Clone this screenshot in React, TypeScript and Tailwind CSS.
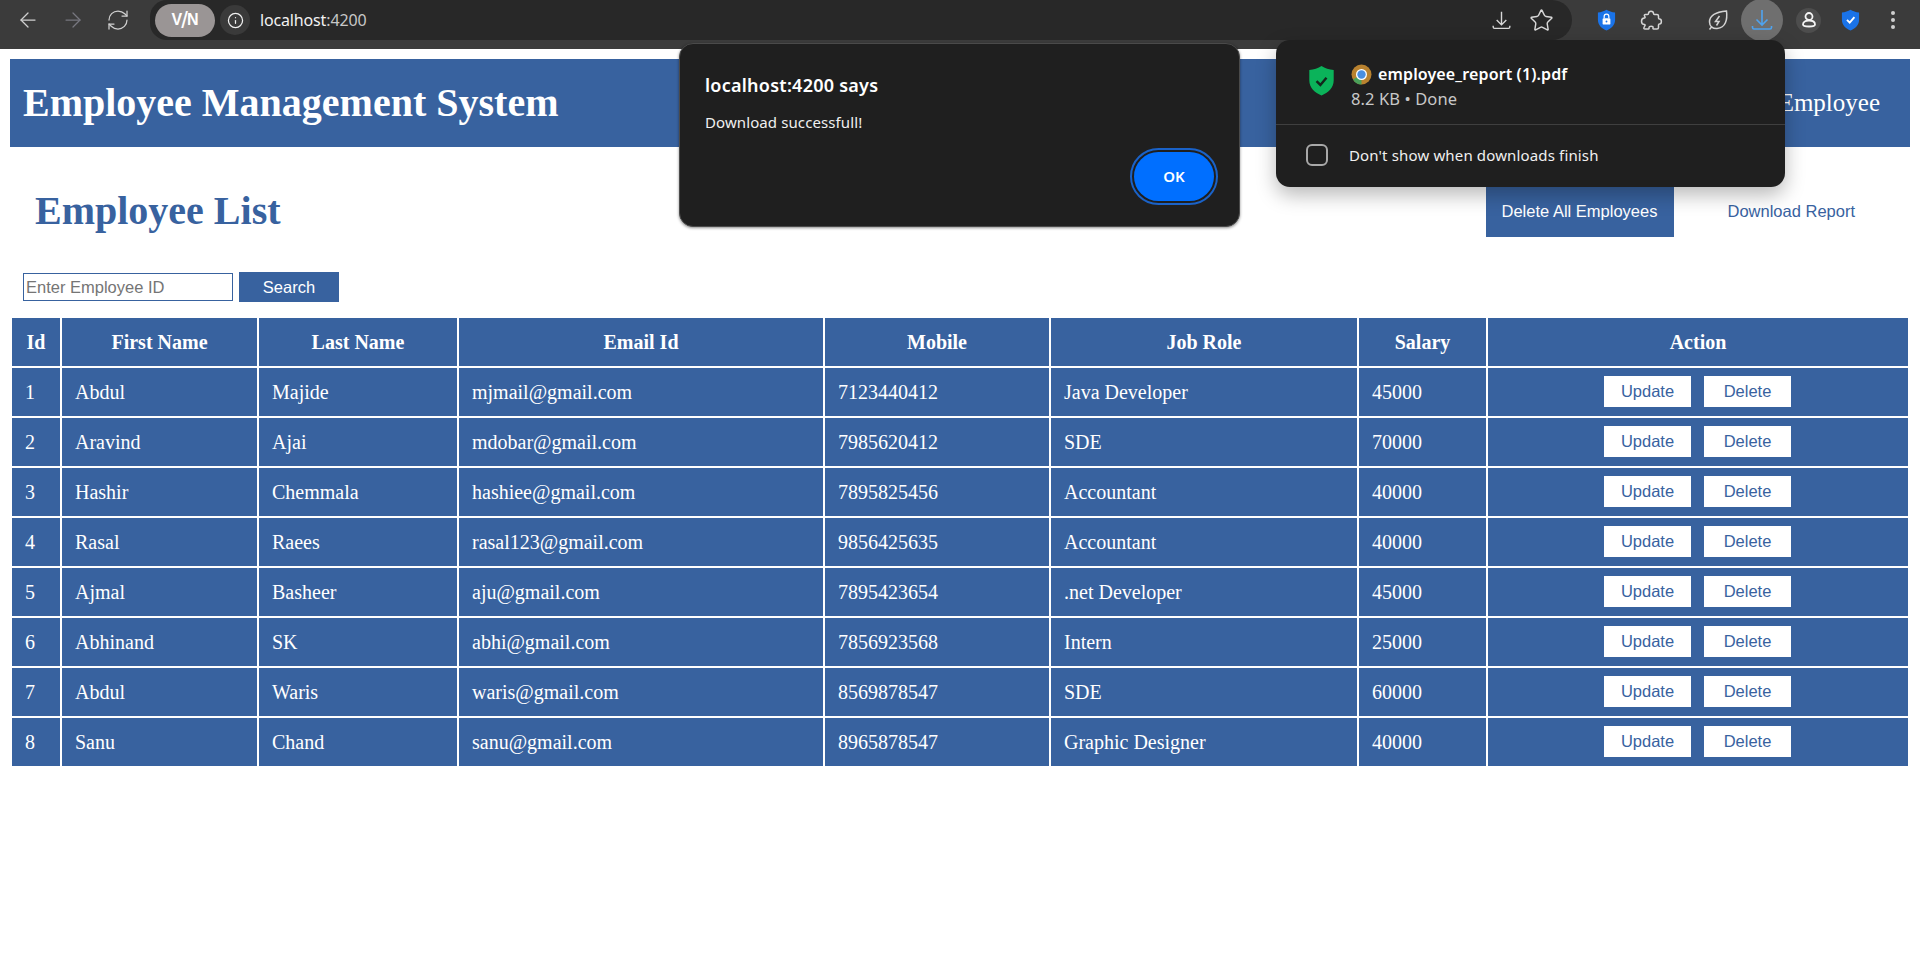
import React from "react";
import { ArrowLeft, ArrowRight, RefreshCw, Star, Info } from "lucide-react";

const rows = [
  ["1", "Abdul", "Majide", "mjmail@gmail.com", "7123440412", "Java Developer", "45000"],
  ["2", "Aravind", "Ajai", "mdobar@gmail.com", "7985620412", "SDE", "70000"],
  ["3", "Hashir", "Chemmala", "hashiee@gmail.com", "7895825456", "Accountant", "40000"],
  ["4", "Rasal", "Raees", "rasal123@gmail.com", "9856425635", "Accountant", "40000"],
  ["5", "Ajmal", "Basheer", "aju@gmail.com", "7895423654", ".net Developer", "45000"],
  ["6", "Abhinand", "SK", "abhi@gmail.com", "7856923568", "Intern", "25000"],
  ["7", "Abdul", "Waris", "waris@gmail.com", "8569878547", "SDE", "60000"],
  ["8", "Sanu", "Chand", "sanu@gmail.com", "8965878547", "Graphic Designer", "40000"],
];
const heads = ["Id", "First Name", "Last Name", "Email Id", "Mobile", "Job Role", "Salary", "Action"];
const widths = [48, 195, 198, 364, 224, 306, 127, 420];

function DownloadGlyph({ color, size = 24 }: { color: string; size?: number }) {
  return (
    <svg width={size} height={size} viewBox="0 0 24 24" fill="none" stroke={color} strokeWidth="1.600">
      <path d="M12 2v15M6.500 11.500l5.500 5.500 5.500-5.500M2.500 18v1.500a1.500 1.500 0 0 0 1.500 1.500h16a1.500 1.500 0 0 0 1.500-1.500V18" />
    </svg>
  );
}

function Shield({ fill, children, size = 19 }: { fill: string; children?: React.ReactNode; size?: number }) {
  return (
    <svg width={size} height={size * 1.15} viewBox="0 0 24 28" fill="none">
      <path d="M12 1 C15 3 19 4.200 23 4.500 V14 C23 20.500 18 25 12 27.500 C6 25 1 20.500 1 14 V4.500 C5 4.200 9 3 12 1 Z" fill={fill} />
      {children}
    </svg>
  );
}

export default function App() {
  return (
    <div className="relative min-h-[960px] w-[1920px] overflow-hidden bg-white font-['Liberation_Serif',serif]">
      {/* browser toolbar */}
      <div className="flex h-[49px] items-start bg-[#3b3b3b]">
        <div className="flex h-[40px] w-[150px] items-center pl-[5px] text-[#d0d0d0]">
          <span className="flex w-[45px] justify-center"><ArrowLeft size={24} strokeWidth={1.25} /></span>
          <span className="flex w-[45px] justify-center text-[#77777f]"><ArrowRight size={24} strokeWidth={1.25} /></span>
          <span className="flex w-[45px] justify-center"><RefreshCw size={24} strokeWidth={1.25} /></span>
        </div>
        <div className="flex h-[40px] w-[1422px] items-center rounded-r-[24px] rounded-l-[20px] bg-[#282828] pl-[5px]">
          <div className="relative flex h-[33px] w-[60px] items-center justify-center rounded-[17px] bg-[#9a9595] font-['Liberation_Sans',sans-serif] text-[16px] font-bold text-white">
            V<span className="mx-[-1px] text-[24px] font-normal leading-none">/</span>N
          </div>
          <div className="ml-[5px] flex h-[30px] w-[30px] items-center justify-center rounded-full bg-[#3a3a3a] text-[#f0f0f0]">
            <Info size={17} strokeWidth={1.75} />
          </div>
          <div className="ml-[10px] font-['Noto_Sans',sans-serif] text-[16px] tracking-[-0.15px] text-[#f2f2f2]">
            localhost<span className="text-[#c7c7c7]">:4200</span>
          </div>
          <div className="ml-auto flex items-center pr-[18px]">
            <DownloadGlyph color="#d8d8d8" size={21} />
            <Star size={25} strokeWidth={1.4} className="ml-[17px] text-[#d8d8d8]" />
          </div>
        </div>
        <div className="flex h-[40px] items-center">
          <span className="ml-[22px] flex w-[24px] justify-center">
            <Shield fill="#1a73e8">
              <rect x="7" y="12" width="10" height="8" rx="1.500" fill="#fff" />
              <path d="M9 12V9.500a3 3 0 0 1 6 0V12" stroke="#fff" strokeWidth="1.600" />
              <circle cx="12" cy="16" r="1.200" fill="#1a73e8" />
            </Shield>
          </span>
          <svg className="ml-[21px]" width="24" height="24" viewBox="0 0 24 24" fill="none" stroke="#d4d4d4" strokeWidth="1.500">
            <path d="M9.500 5.500 C9.500 2.500 14.500 2.500 14.500 5.500 C14.500 6 14.800 6.500 15.500 6.500 L18 6.500 C19 6.500 19.500 7 19.500 8 L19.500 10 C19.500 10.800 20 11 20.500 11 C23 11 23 16 20.500 16 C20 16 19.500 16.300 19.500 17 L19.500 19.500 C19.500 20.500 19 21 18 21 L14.500 21 C14 21 13.800 20.500 14 20 C15 17.500 9.500 17.500 10 20 C10.100 20.600 10 21 9.500 21 L6 21 C5 21 4.500 20.500 5 19.500 L6 17.500 C6.300 17 6 16.500 5.500 16.500 C1.500 16.500 1.500 10 5.500 10 C6 10 6.300 9.500 6 9 L5.500 8 C5 7 5.500 6.500 6.500 6.500 L8.500 6.500 C9.200 6.500 9.500 6 9.500 5.500 Z" />
          </svg>
          <svg className="ml-[43px]" width="24" height="24" viewBox="0 0 24 24" fill="none" stroke="#d4d4d4" strokeWidth="1.500">
            <path d="M20.500 3 C21.500 11 20 20 11 20.500 C7 20.800 3.500 18.500 3.500 14 C3.500 8 10 4 20.500 3 Z" />
            <path d="M13.500 8 L9.500 13.500 H13 L10.500 17.500 M3.500 21.500 L6 18.500" />
          </svg>
          <div className="ml-[11px] flex h-[42px] w-[42px] items-center justify-center rounded-full bg-[#6f6f6f]">
            <DownloadGlyph color="#4fa3ef" />
          </div>
          <div className="ml-[13px] flex h-[25px] w-[25px] items-center justify-center rounded-full bg-[#4d4d4d]">
            <svg width="18" height="18" viewBox="0 0 18 18" fill="none" stroke="#f4f4f4" strokeWidth="1.800">
              <circle cx="9" cy="5.500" r="3.500" />
              <path d="M9 9.500 C5 9.500 3 11.500 3 13.500 C3 15 4.500 15.500 9 15.500 C13.500 15.500 15 15 15 13.500 C15 11.500 13 9.500 9 9.500 Z" />
            </svg>
          </div>
          <span className="ml-[17px] flex w-[24px] justify-center">
            <Shield fill="#1a73e8">
              <path d="M7.500 14 L11 17.500 L17 10.500" stroke="#fff" strokeWidth="2.400" />
            </Shield>
          </span>
          <svg className="ml-[19px]" width="24" height="24" viewBox="0 0 24 24" fill="#cfcfcf">
            <circle cx="12" cy="5" r="2" /><circle cx="12" cy="12" r="2" /><circle cx="12" cy="19" r="2" />
          </svg>
        </div>
      </div>

      {/* page */}
      <div className="px-[10px] pt-[10px]">
        <header className="flex h-[88px] items-center justify-between bg-[#38629f] px-[13px] text-white">
          <h1 className="text-[40px] font-bold leading-none">Employee Management System</h1>
          <span className="pr-[17px] text-[25px]">Employee</span>
        </header>

        <div className="mt-[38px] flex h-[52px] items-center pl-[25px]">
          <h2 className="text-[40px] font-bold leading-none text-[#38629f]">Employee List</h2>
          <button className="ml-auto h-[52px] w-[188px] bg-[#38629f] font-['Liberation_Sans',sans-serif] text-[16.500px] text-white">Delete All Employees</button>
          <button className="ml-[54px] mr-[55px] font-['Liberation_Sans',sans-serif] text-[16.500px] text-[#38629f]">Download Report</button>
        </div>

        <div className="mt-[35px] flex h-[30px] items-center pl-[13px]">
          <input
            placeholder="Enter Employee ID"
            className="h-[28px] w-[210px] border border-[#38629f] bg-white px-[2px] pt-[1px] font-['Liberation_Sans',sans-serif] text-[16.500px] outline-none placeholder:text-[#757575]"
          />
          <button className="ml-[6px] h-[30px] w-[100px] bg-[#38629f] pt-[1px] font-['Liberation_Sans',sans-serif] text-[16.500px] text-white">Search</button>
        </div>

        <table className="mt-[14px] w-[1900px] table-fixed border-separate border-spacing-[2px] text-[20px] text-white">
          <colgroup>
            {widths.map((w, i) => (
              <col key={i} style={{ width: w }} />
            ))}
          </colgroup>
          <thead>
            <tr className="h-[48px]">
              {heads.map((h) => (
                <th key={h} className="bg-[#38629f] px-[13px] text-center font-bold">{h}</th>
              ))}
            </tr>
          </thead>
          <tbody>
            {rows.map((r) => (
              <tr key={r[0]} className="h-[48px]">
                {r.map((c, i) => (
                  <td key={i} className="bg-[#38629f] px-[13px]">{c}</td>
                ))}
                <td className="bg-[#38629f] text-center">
                  <div className="mb-[1px] flex justify-center gap-[13px] pr-[1px]">
                    <button className="h-[31px] w-[87px] bg-white font-['Liberation_Sans',sans-serif] text-[16.500px] text-[#38629f]">Update</button>
                    <button className="h-[31px] w-[87px] bg-white font-['Liberation_Sans',sans-serif] text-[16.500px] text-[#38629f]">Delete</button>
                  </div>
                </td>
              </tr>
            ))}
          </tbody>
        </table>
      </div>

      {/* alert dialog */}
      <div className="absolute left-[679px] top-[43px] h-[184px] w-[561px] rounded-[14px] border border-[#4a4a4a] bg-[#1f1f1f] font-['Noto_Sans',sans-serif] text-white shadow-[0_1px_3px_rgba(0,0,0,0.45)]">
        <div className="absolute left-[25px] top-[28px] text-[18px] font-semibold leading-[26px] tracking-[0.25px]">localhost:4200 says</div>
        <div className="absolute left-[25px] top-[67px] text-[15px] leading-[22px] tracking-[0.1px] text-[#f0f0f0]">Download successfull!</div>
        <div className="absolute left-[450px] top-[104px] rounded-full border-2 border-[#1a62c8] p-[2px]">
          <button className="block h-[49px] w-[80px] rounded-full bg-[#006fff] text-[15px] font-semibold text-white">OK</button>
        </div>
      </div>

      {/* downloads bubble */}
      <div className="absolute left-[1276px] top-[40px] h-[147px] w-[509px] rounded-[14px] bg-[#1f1f1f] font-['Noto_Sans',sans-serif] text-white shadow-[0_8px_20px_rgba(0,0,0,0.28)]">
        <div className="flex h-[85px] border-b border-[#3f3f3f]">
          <div className="ml-[32px] mt-[25px]">
            <Shield fill="#0bb35a" size={27}>
              <path d="M7.500 14.500 L11 18 L16.500 11.500" stroke="#13261c" strokeWidth="2.200" />
            </Shield>
          </div>
          <div className="ml-[16px] mt-[22px]">
            <div className="flex items-center">
              <svg width="21" height="21" viewBox="0 0 21 21">
                <circle cx="10.500" cy="10.500" r="10" fill="#b9822f" />
                <path d="M10.500 10.500 L2 15.500 A10 10 0 0 0 10.500 20.500 Z" fill="#4aa05a" />
                <circle cx="10.500" cy="10.500" r="5.500" fill="#fff" />
                <circle cx="10.500" cy="10.500" r="4.200" fill="#4a8fe0" />
              </svg>
              <span className="ml-[6px] text-[16px] font-semibold leading-[24px] tracking-[0.13px]">employee_report (1).pdf</span>
            </div>
            <div className="mt-[1px] text-[16.500px] leading-[24px] tracking-[0.1px] text-[#c8c8c8]">8.2 KB • Done</div>
          </div>
        </div>
        <div className="flex h-[60px] items-center pl-[30px]">
          <span className="h-[22px] w-[22px] rounded-[6px] border-2 border-[#a8a8a8]" />
          <span className="ml-[21px] text-[15px] tracking-[0.15px] text-[#f0f0f0]">Don't show when downloads finish</span>
        </div>
      </div>
    </div>
  );
}
